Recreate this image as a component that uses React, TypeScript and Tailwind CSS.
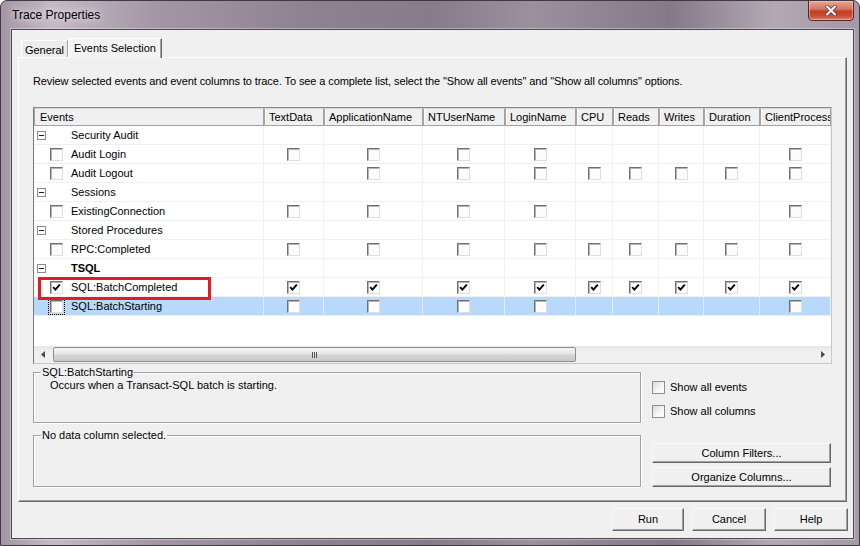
import React from 'react';

type Col = { name: string; w: string };

const columns: Col[] = [
  { name: 'TextData', w: 'w-[60px]' },
  { name: 'ApplicationName', w: 'w-[99px]' },
  { name: 'NTUserName', w: 'w-[82px]' },
  { name: 'LoginName', w: 'w-[71px]' },
  { name: 'CPU', w: 'w-[37px]' },
  { name: 'Reads', w: 'w-[46px]' },
  { name: 'Writes', w: 'w-[45px]' },
  { name: 'Duration', w: 'w-[56px]' },
  { name: 'ClientProcessID', w: 'w-[71px]' },
];

type Row =
  | { kind: 'cat'; name: string; bold?: boolean }
  | { kind: 'ev'; name: string; cells: number[]; checked?: boolean; selected?: boolean };

const basic = [1, 1, 1, 1, 0, 0, 0, 0, 1];
const logout = [0, 1, 1, 1, 1, 1, 1, 1, 1];
const all = [1, 1, 1, 1, 1, 1, 1, 1, 1];

const rows: Row[] = [
  { kind: 'cat', name: 'Security Audit' },
  { kind: 'ev', name: 'Audit Login', cells: basic },
  { kind: 'ev', name: 'Audit Logout', cells: logout },
  { kind: 'cat', name: 'Sessions' },
  { kind: 'ev', name: 'ExistingConnection', cells: basic },
  { kind: 'cat', name: 'Stored Procedures' },
  { kind: 'ev', name: 'RPC:Completed', cells: all },
  { kind: 'cat', name: 'TSQL', bold: true },
  { kind: 'ev', name: 'SQL:BatchCompleted', cells: all, checked: true },
  { kind: 'ev', name: 'SQL:BatchStarting', cells: basic, selected: true },
];

const Tick = () => (
  <svg width="9" height="9" viewBox="0 0 9 9">
    <path d="M1.2 4.2 3.4 6.6 7.8 1.6" fill="none" stroke="#000" strokeWidth="1.9" />
  </svg>
);

const GridBox = ({ checked }: { checked?: boolean }) => (
  <span className="flex h-[13px] w-[13px] items-center justify-center border border-t-[#707070] border-l-[#707070] border-r-[#dedede] border-b-[#dedede] bg-[#fcfcfc] shadow-[inset_1px_1px_0_#b4b4b4]">
    {checked && <Tick />}
  </span>
);

const Minus = () => (
  <span className="flex h-[9px] w-[9px] items-center justify-center border border-[#8c8c8c] bg-white">
    <span className="h-px w-[5px] bg-[#1e1e1e]" />
  </span>
);

const ClassicButton = ({ label, w, h }: { label: string; w: string; h: string }) => (
  <div
    className={`flex ${w} ${h} items-center justify-center border border-t-[#f8f8f8] border-l-[#f8f8f8] border-r-[#696969] border-b-[#696969] bg-[#f0f0f0] shadow-[inset_-1px_-1px_0_#a0a0a0] text-black`}
  >
    {label}
  </div>
);

const SideCheck = ({ label }: { label: string }) => (
  <div className="flex h-[13px] items-center">
    <span className="h-[13px] w-[13px] border border-[#8e8f8f] bg-[linear-gradient(135deg,#dcdcdc,#f6f6f6_60%,#ffffff)]" />
    <span className="ml-[5px] leading-[13px]">{label}</span>
  </div>
);

const App: React.FC = () => {
  return (
    <div className="relative flex h-[546px] w-[860px] flex-col overflow-hidden rounded-t-[7px] border border-[#3f3a42] bg-[linear-gradient(90deg,#a395a5_0%,#c4b9c4_6%,#a496a6_18%,#8f8292_35%,#877a8a_50%,#9c8f9e_62%,#857889_78%,#b3a8b4_90%,#a598a7_100%)] font-['Liberation_Sans',Arial,sans-serif] text-[11px] text-black">
      {/* title bar */}
      <div className="flex h-[28px] shrink-0 items-start justify-between">
        <span className="mt-[7px] pl-[11px] font-['Segoe_UI','Liberation_Sans',sans-serif] text-[12px] leading-[15px] text-black [text-shadow:0_0_6px_#e8e2e8,0_0_10px_#e8e2e8]">
          Trace Properties
        </span>
        <div className="-mt-px mr-[5px] flex h-[21px] w-[46px] items-center justify-center rounded-b-[4px] border border-[#5a2824] bg-[linear-gradient(#e8a796_0%,#d77a64_40%,#c13f27_55%,#c9503a_80%,#e0826a_100%)] shadow-[inset_0_0_0_1px_rgba(255,210,200,0.45)]">
          <svg width="14" height="11" viewBox="0 0 14 11">
            <path d="M3 1.5 11 9.5M11 1.5 3 9.5" stroke="#5a2a2a" strokeWidth="3.6" strokeLinecap="round" />
            <path d="M3 1.5 11 9.5M11 1.5 3 9.5" stroke="#fff" strokeWidth="2.2" strokeLinecap="round" />
          </svg>
        </div>
      </div>

      {/* client area */}
      <div className="mb-[6px] ml-[10px] mr-[5px] flex flex-1 flex-col border border-[#4e4751] bg-[#f0f0f0] px-[6px] pt-[8px] shadow-[0_0_0_1px_rgba(255,255,255,0.35)]">
        {/* tabs */}
        <div className="flex h-[19px] shrink-0 items-end pl-[3px]">
          <div className="flex h-[17px] w-[47px] items-center justify-center rounded-tl-[2px] border border-b-0 border-t-[#fdfdfd] border-l-[#fdfdfd] border-r-[#a0a0a0] bg-[#ececec] pt-[2px]">
            General
          </div>
          <div className="relative z-10 -mb-px flex h-[20px] w-[94px] items-center justify-center border border-b-0 border-t-white border-l-white border-r-[#6a6a6a] bg-[#f3f3f3] pb-[1px] shadow-[inset_-1px_0_0_#a0a0a0]">
            Events Selection
          </div>
        </div>

        {/* tab page */}
        <div className="flex h-[445px] shrink-0 flex-col border border-t-white border-l-white border-r-[#6a6a6a] border-b-[#6a6a6a] bg-[#f0f0f0] pl-[14px] pt-[17px] shadow-[inset_-1px_-1px_0_#a0a0a0]">
          <div className="h-[13px] leading-[13px] tracking-[-0.1px]">
            Review selected events and event columns to trace. To see a complete list, select the "Show all events" and "Show all columns" options.
          </div>

          {/* grid */}
          <div className="mt-[19px] flex h-[257px] w-[799px] flex-col border border-t-[#8a8a8a] border-l-[#7a7a7a] border-r-[#c8c8c8] border-b-[#c8c8c8] bg-white">
            {/* header */}
            <div className="flex h-[18px] shrink-0 bg-[#f0f0f0]">
              <div className="flex w-[230px] shrink-0 items-center border border-[#a3a3a3] border-t-[#d6d6d6] bg-[#f0f0f0] pl-[5px]">
                Events
              </div>
              {columns.map((c) => (
                <div
                  key={c.name}
                  className={`flex ${c.w} shrink-0 items-center overflow-hidden whitespace-nowrap border border-l-[#a3a3a3] border-r-[#a3a3a3] border-b-[#a3a3a3] border-t-[#d6d6d6] bg-[#f0f0f0] pl-[4px] shadow-[inset_1px_0_0_#fff]`}
                >
                  {c.name}
                </div>
              ))}
            </div>

            {/* rows */}
            <div className="flex-1 overflow-hidden bg-white">
              {rows.map((r) => {
                const sel = r.kind === 'ev' && r.selected;
                const line = sel ? 'border-[#e2eefa]' : 'border-[#f0f0f0]';
                return (
                  <div key={r.name} className={`flex h-[19px] border-b ${line} ${sel ? 'bg-[#b8d9fb]' : 'bg-white'}`}>
                    <div className={`flex w-[230px] shrink-0 items-center border-r ${line}`}>
                      {r.kind === 'cat' ? (
                        <>
                          <span className="ml-[3px]">
                            <Minus />
                          </span>
                          <span className={`ml-[25px] pt-px ${r.bold ? 'font-bold' : ''}`}>{r.name}</span>
                        </>
                      ) : (
                        <>
                          <span className={`ml-[15px] p-px ${sel ? 'outline-1 outline-dotted outline-black' : ''}`}>
                            <GridBox checked={r.checked} />
                          </span>
                          <span className="ml-[7px] pt-px">{r.name}</span>
                        </>
                      )}
                    </div>
                    {columns.map((c, i) => (
                      <div key={c.name} className={`flex ${c.w} shrink-0 items-center justify-center border-r ${line}`}>
                        {r.kind === 'ev' && r.cells[i] === 1 && <GridBox checked={r.checked} />}
                      </div>
                    ))}
                  </div>
                );
              })}
            </div>

            {/* horizontal scrollbar */}
            <div className="flex h-[17px] shrink-0 bg-[linear-gradient(#e6e6e6,#f0f0f0_35%,#f0f0f0)]">
              <div className="flex w-[17px] items-center justify-center">
                <svg width="4" height="7" viewBox="0 0 4 7">
                  <path d="M4 0 0 3.5 4 7Z" fill="#4a4a4a" />
                </svg>
              </div>
              <div className="flex flex-1 items-stretch py-px">
                <div className="ml-[2px] flex w-[523px] items-center justify-center gap-px rounded-[2px] border border-[#8e8e8e] bg-[linear-gradient(#f4f4f4,#e6e6e6_45%,#d4d4d4_55%,#cacaca)]">
                  <span className="h-[6px] w-px bg-[#555]" />
                  <span className="h-[6px] w-px bg-[#555]" />
                  <span className="h-[6px] w-px bg-[#555]" />
                </div>
              </div>
              <div className="flex w-[17px] items-center justify-center">
                <svg width="4" height="7" viewBox="0 0 4 7">
                  <path d="M0 0 4 3.5 0 7Z" fill="#4a4a4a" />
                </svg>
              </div>
            </div>
          </div>

          {/* lower section */}
          <div className="mt-[2px] flex">
            <div className="flex w-[608px] flex-col">
              <fieldset className="h-[57px] border border-[#a0a0a0] shadow-[inset_1px_1px_0_#fff,1px_1px_0_#fff]">
                <legend className="ml-[7px] px-px leading-[13px]">SQL:BatchStarting</legend>
                <div className="pl-[16px] leading-[13px]">Occurs when a Transact-SQL batch is starting.</div>
              </fieldset>
              <fieldset className="mt-[6px] h-[58px] border border-[#a0a0a0] shadow-[inset_1px_1px_0_#fff,1px_1px_0_#fff]">
                <legend className="ml-[7px] px-px leading-[13px]">No data column selected.</legend>
              </fieldset>
            </div>
            <div className="ml-[11px] flex w-[179px] flex-col">
              <div className="mt-[15px]">
                <SideCheck label="Show all events" />
              </div>
              <div className="mt-[11px]">
                <SideCheck label="Show all columns" />
              </div>
              <div className="mt-[25px]">
                <ClassicButton label="Column Filters..." w="w-[179px]" h="h-[20px]" />
              </div>
              <div className="mt-[4px]">
                <ClassicButton label="Organize Columns..." w="w-[179px]" h="h-[20px]" />
              </div>
            </div>
          </div>
        </div>

        {/* dialog buttons */}
        <div className="-mr-px mt-[6px] flex justify-end gap-[8px]">
          <ClassicButton label="Run" w="w-[72px]" h="h-[23px]" />
          <ClassicButton label="Cancel" w="w-[74px]" h="h-[23px]" />
          <ClassicButton label="Help" w="w-[74px]" h="h-[23px]" />
        </div>
      </div>

      {/* annotation */}
      <div className="absolute left-[37px] top-[276px] h-[23px] w-[173px] border-[3px] border-[#e41b23]" />
    </div>
  );
};

export default App;
